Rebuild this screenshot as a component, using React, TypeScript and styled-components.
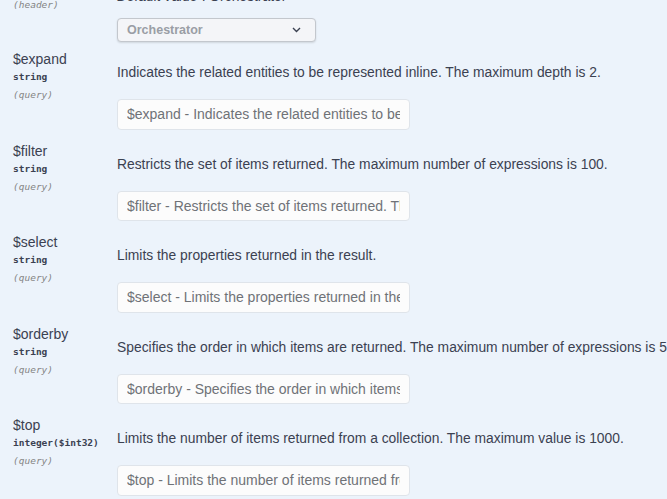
import styled, { createGlobalStyle } from "styled-components";

const Global = createGlobalStyle`
  html, body {
    margin: 0;
    padding: 0;
    background: #ecf3fb;
    overflow: hidden;
  }
  body {
    font-family: "Liberation Sans", Arial, sans-serif;
    color: #3b4151;
  }
`;

const Page = styled.div`
  width: 667px;
  height: 499px;
  overflow: hidden;
  background: #ecf3fb;
`;

// the list is scrolled: the first row is partly above the top edge
const Table = styled.div`
  margin-top: -40px;
  display: flex;
  flex-direction: column;
`;

const Row = styled.div<{ $bottom: number }>`
  display: grid;
  grid-template-columns: 104px 1fr;
  padding-left: 13px;
  padding-bottom: ${(p) => p.$bottom}px;
`;

const NameCell = styled.div`
  display: flex;
  flex-direction: column;
`;

const Name = styled.div`
  font-size: 14px;
  line-height: 18px;
  white-space: nowrap;
  color: #3b4151;
`;

const Type = styled.div`
  font-family: "DejaVu Sans Mono", "Liberation Mono", monospace;
  font-weight: bold;
  font-size: 9.5px;
  line-height: 18px;
  color: #3b4151;
`;

const In = styled.div`
  font-family: "DejaVu Sans Mono", "Liberation Mono", monospace;
  font-style: italic;
  font-size: 9.5px;
  line-height: 18px;
  color: #858585;
`;

const DescCell = styled.div<{ $top: number }>`
  display: flex;
  flex-direction: column;
  align-items: flex-start;
  padding-top: ${(p) => p.$top}px;
`;

const Desc = styled.div`
  font-size: 13.85px;
  line-height: 18px;
  white-space: nowrap;
  color: #3b4151;
`;

const Field = styled.input`
  margin-top: 18px;
  box-sizing: border-box;
  width: 293px;
  height: 30.5px;
  padding: 0 9px;
  border: 1px solid #dfe4ea;
  border-radius: 4px;
  background: #fcfcfc;
  font-family: "Liberation Sans", Arial, sans-serif;
  font-size: 14px;
  color: #3b4151;
  outline: none;
  &::placeholder {
    color: #6f7277;
  }
`;

const Select = styled.div`
  margin-top: 13px;
  box-sizing: border-box;
  width: 199px;
  height: 24px;
  display: flex;
  align-items: center;
  justify-content: space-between;
  padding: 0 14px 0 9px;
  border: 1px solid #c3c7cd;
  border-radius: 4px;
  background: #f4f5f8;
  box-shadow: 0 1px 2px rgba(0, 0, 0, 0.12);
  font-size: 12.5px;
  font-weight: bold;
  color: #9a9ea5;
`;

type Param = {
  name: string;
  type: string;
  format?: string;
  desc: string;
};

const params: Param[] = [
  {
    name: "$expand",
    type: "string",
    desc: "Indicates the related entities to be represented inline. The maximum depth is 2.",
  },
  {
    name: "$filter",
    type: "string",
    desc: "Restricts the set of items returned. The maximum number of expressions is 100.",
  },
  {
    name: "$select",
    type: "string",
    desc: "Limits the properties returned in the result.",
  },
  {
    name: "$orderby",
    type: "string",
    desc: "Specifies the order in which items are returned. The maximum number of expressions is 5.",
  },
  {
    name: "$top",
    type: "integer",
    format: "($int32)",
    desc: "Limits the number of items returned from a collection. The maximum value is 1000.",
  },
];

export default function App() {
  return (
    <Page>
      <Global />
      <Table>
        <Row $bottom={8}>
          <NameCell>
            <Name>X-UIPATH-Tenant</Name>
            <Type>string</Type>
            <In>(header)</In>
          </NameCell>
          <DescCell $top={27}>
            <Desc>
              <i>Default value</i> : Orchestrator
            </Desc>
            <Select>
              <span>Orchestrator</span>
              <svg width="9" height="6" viewBox="0 0 9 6">
                <path
                  d="M1 1l3.5 3.5L8 1"
                  fill="none"
                  stroke="#3b4151"
                  strokeWidth="1.4"
                />
              </svg>
            </Select>
          </DescCell>
        </Row>
        {params.map((p) => (
          <Row key={p.name} $bottom={12}>
            <NameCell>
              <Name>{p.name}</Name>
              <Type>
                {p.type}
                {p.format}
              </Type>
              <In>(query)</In>
            </NameCell>
            <DescCell $top={13}>
              <Desc>{p.desc}</Desc>
              <Field disabled placeholder={`${p.name} - ${p.desc}`} />
            </DescCell>
          </Row>
        ))}
      </Table>
    </Page>
  );
}
